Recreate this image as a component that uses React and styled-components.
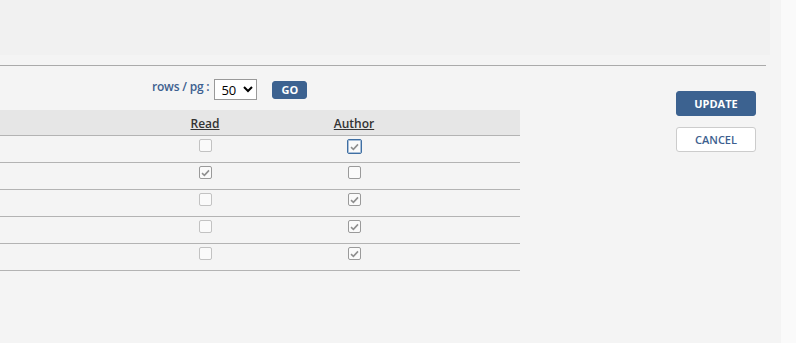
import styled, { createGlobalStyle } from 'styled-components';

const GlobalStyle = createGlobalStyle`
  html, body {
    margin: 0;
    padding: 0;
    background: #fafafa;
  }
  body {
    font-family: 'Open Sans', 'Liberation Sans', sans-serif;
  }
`;

const Page = styled.div`
  width: 781px;
  height: 343px;
  background: #f4f4f4;
`;

const Header = styled.div`
  width: 770px;
  height: 55px;
  background: #f1f1f1;
`;

const Rule = styled.hr`
  width: 766px;
  margin: 10px 0 0;
  border: 0;
  border-top: 1px solid #aaaaaa;
`;

const Main = styled.div`
  display: flex;
  align-items: flex-start;
`;

const Content = styled.div`
  width: 520px;
  padding-top: 13px;
`;

const Toolbar = styled.div`
  display: flex;
  align-items: center;
  padding-left: 152px;
  height: 21px;
`;

const Label = styled.span`
  font-size: 12px;
  font-weight: 600;
  color: #3d5f8f;
  margin-right: 5px;
  margin-top: -6px;
  letter-spacing: -0.2px;
`;

const Select = styled.select`
  width: 43px;
  height: 21px;
  font-family: 'Open Sans', 'Liberation Sans', sans-serif;
  font-size: 13px;
  color: #000;
  border: 1px solid #999;
  border-radius: 0;
  background: #fff;
  padding: 0 0 0 2px;
`;

const Button = styled.button`
  font-family: 'Open Sans', 'Liberation Sans', sans-serif;
  font-size: 11px;
  border-radius: 3px;
  cursor: pointer;
  padding: 0;
  background: ${(p) => (p.$light ? '#ffffff' : '#3c6290')};
  color: ${(p) => (p.$light ? '#3d5f8f' : '#ffffff')};
  border: 1px solid ${(p) => (p.$light ? '#cccccc' : '#3c6290')};
  font-weight: ${(p) => (p.$light ? 600 : 700)};
`;

const GoButton = styled(Button)`
  width: 35px;
  height: 18px;
  margin-left: 15px;
`;

const Grid = styled.div`
  display: grid;
  grid-template-columns: 160px 90px 208px 1fr;
`;

const HeadRow = styled(Grid)`
  margin-top: 10px;
  height: 25px;
  background: #e6e6e6;
  border-bottom: 1px solid #b3b3b3;
  align-items: center;
`;

const HeadCell = styled.div`
  text-align: center;
  font-size: 12px;
  font-weight: 600;
  color: #333;
  text-decoration: underline;
  padding-top: 1px;
`;

const Row = styled(Grid)`
  height: 26px;
  border-bottom: 1px solid #b3b3b3;
  align-items: start;
`;

const Cell = styled.div`
  display: flex;
  justify-content: center;
  padding-top: 3px;
`;

const Box = styled.span`
  box-sizing: border-box;
  width: ${(p) => (p.$focus ? 15 : 13)}px;
  height: ${(p) => (p.$focus ? 15 : 13)}px;
  border: 1px solid ${(p) => (p.$focus ? '#3f6fa3' : p.$tone)};
  border-radius: 2px;
  background: #fafafa;
  display: flex;
  align-items: center;
  justify-content: center;
  ${(p) => (p.$focus ? 'box-shadow: inset 0 0 0 1px #a9bfd8;' : '')}
`;

const Check = ({ checked, focus, strong }) => (
  <Box $focus={focus} $tone={strong || checked ? '#9a9a9a' : '#c2c2c2'}>
    {checked && (
      <svg width="9" height="8" viewBox="0 0 9 8">
        <path d="M1 4.2 L3.4 6.4 L8 1.4" fill="none" stroke="#8f8f8f" strokeWidth="1.6" />
      </svg>
    )}
  </Box>
);

const Side = styled.div`
  margin-left: 156px;
  width: 80px;
  padding-top: 25px;
  display: flex;
  flex-direction: column;
  gap: 11px;
`;

const SideButton = styled(Button)`
  width: 80px;
  height: 25px;
`;

const rows = [
  { read: false, author: true, focus: true },
  { read: true, author: false },
  { read: false, author: true },
  { read: false, author: true },
  { read: false, author: true },
];

export default function App() {
  return (
    <>
      <GlobalStyle />
      <Page>
        <Header />
        <Rule />
        <Main>
          <Content>
            <Toolbar>
              <Label>rows / pg :</Label>
              <Select defaultValue="50">
                <option>10</option>
                <option>25</option>
                <option>50</option>
                <option>100</option>
              </Select>
              <GoButton>GO</GoButton>
            </Toolbar>
            <HeadRow>
              <div />
              <HeadCell>Read</HeadCell>
              <HeadCell>Author</HeadCell>
              <div />
            </HeadRow>
            {rows.map((r, i) => (
              <Row key={i}>
                <div />
                <Cell>
                  <Check checked={r.read} />
                </Cell>
                <Cell>
                  <Check checked={r.author} focus={r.focus} strong />
                </Cell>
                <div />
              </Row>
            ))}
          </Content>
          <Side>
            <SideButton>UPDATE</SideButton>
            <SideButton $light>CANCEL</SideButton>
          </Side>
        </Main>
      </Page>
    </>
  );
}
